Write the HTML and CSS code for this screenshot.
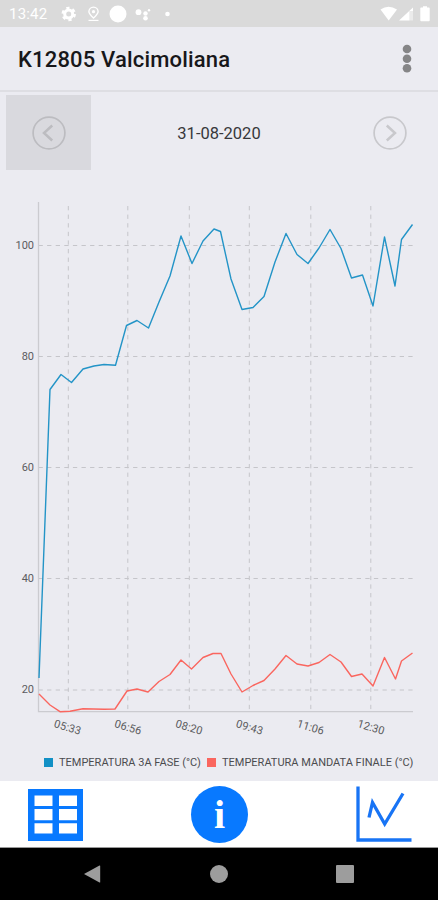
FILE: index.html
```
<!DOCTYPE html>
<html lang="it">
<head>
<meta charset="utf-8">
<title>K12805 Valcimoliana</title>
<link rel="stylesheet" href="styles.css">
</head>
<body>
<div class="screen">
  <div class="status">
    <span class="clock">13:42</span>
    <svg class="status-left" width="120" height="27" viewBox="0 0 120 27" fill="#fff">
      <circle cx="13.700" cy="14" r="4" fill="none" stroke="#fff" stroke-width="3"/>
      <circle cx="13.700" cy="14" r="6" fill="none" stroke="#fff" stroke-width="2.400" stroke-dasharray="3.200 3.083"/>
      <path d="M38.500 18C35.500 15.200 33.900 13.500 33.900 11.700a4.600 4.600 0 0 1 9.200 0c0 1.800-1.600 3.500-4.600 6.300z" fill="none" stroke="#fff" stroke-width="1.400"/>
      <circle cx="38.500" cy="11.700" r="1.600"/>
      <path d="M33.500 19.800h10V21h-10z"/>
      <circle cx="63" cy="14" r="8.500"/>
      <circle cx="83.500" cy="12.200" r="2.900"/><circle cx="90.500" cy="13.500" r="2.200"/><circle cx="90.500" cy="18.200" r="2.300"/><circle cx="94" cy="10.300" r="1.200"/>
      <circle cx="112.500" cy="14" r="2.300"/>
    </svg>
    <svg class="status-right" width="54" height="27" viewBox="0 0 54 27" fill="#fff">
      <path d="M3.500 9.500Q11.500 4 20 9.500L11.700 20.500z"/>
      <path d="M22 20.500L36 7.500V11h-3.500v9.500z"/><path d="M32.500 11H36v9.500h-3.500z" opacity=".45"/>
      <path d="M44 7.600h2V6.300h4v1.300h2q.7 0 .7.700v12q0 .9-.9.900h-7.600q-.9 0-.9-.9v-12q0-.7.700-.7z"/>
    </svg>
  </div>
  <header class="header">
    <h1 class="title">K12805 Valcimoliana</h1>
    <svg class="more" width="10" height="30" viewBox="0 0 10 30" fill="#858587"><circle cx="5" cy="5" r="4.300"/><circle cx="5" cy="14.700" r="4.300"/><circle cx="5" cy="24.300" r="4.300"/></svg>
  </header>
  <div class="days">
    <div class="day-button pressed"><svg width="36" height="36" viewBox="0 0 36 36" fill="none" stroke="#bcbcc0"><circle cx="18" cy="18" r="15.900" stroke-width="1.700"/><path d="M21.200 10.500L13 18l8.200 7.500" stroke-width="2.500"/></svg></div>
    <div class="date">31-08-2020</div>
    <div class="day-button"><svg width="36" height="36" viewBox="0 0 36 36" fill="none" stroke="#c8c8cc"><circle cx="18" cy="18" r="15.900" stroke-width="1.700"/><path d="M14.800 10.500L23 18l-8.200 7.500" stroke-width="2.500"/></svg></div>
  </div>
  <svg class="chart" width="438" height="580" viewBox="0 170 438 580">
    <g class="grid">
      <path d="M38.500 245.500H413M38.500 356.500H413M38.500 467.500H413M38.500 578.500H413M38.500 690H413"/>
      <path d="M68.300 206V711.500M127.800 206V711.500M189.300 206V711.500M249.300 206V711.500M310.800 206V711.500M370.800 206V711.500"/>
    </g>
    <path class="axis" d="M38.500 202V711.700H413"/>
    <g class="y-labels"><text x="34" y="248.500">100</text><text x="34" y="359.700">80</text><text x="34" y="470.700">60</text><text x="34" y="582">40</text><text x="34" y="693">20</text></g>
    <g class="x-labels">
      <text transform="translate(67.500 727.500) rotate(17)" y="3.500">05:33</text>
      <text transform="translate(128 727.500) rotate(17)" y="3.500">06:56</text>
      <text transform="translate(189 727.500) rotate(17)" y="3.500">08:20</text>
      <text transform="translate(249.500 727.500) rotate(17)" y="3.500">09:43</text>
      <text transform="translate(310.500 727.500) rotate(17)" y="3.500">11:06</text>
      <text transform="translate(371 727.500) rotate(17)" y="3.500">12:30</text>
    </g>
    <polyline class="line supply" points="39,694 50,705 60,711.700 70,711.200 83,708.700 104,709.200 115,709 127,691 137,689 148,692 159,681.500 170,674.500 181,660 191.500,669 203,657.500 213,653.500 221,653.500 231,674 242,692 253,685.500 264,680.500 275,669 286,655.500 297,664 308,666 319,662.500 330,654.500 341,662 351.500,676.500 362,674 373,686 384.500,657.500 395.500,679 401.500,661 412.500,653"/>
    <polyline class="line phase" points="39,678 50,389.500 61,374.500 71.500,382.500 83,369 94,366 104,364.500 115.500,365.300 126.500,325.500 137,320.500 148.500,328 159,302 170,276 181,236 192,263.500 203,241 214,229 220.500,231.500 231,279 242,309.500 253,307.500 264,296.500 275,262 286,233.500 297,254.500 308,263.500 319,248 330,229.500 341,248.500 351.500,278 362.500,275 373,306 384.500,237 395,286 401.500,239.500 412.500,224.500"/>
  </svg>
  <div class="legend">
    <span class="swatch blue"></span><span class="name first">TEMPERATURA 3A FASE (°C)</span>
    <span class="swatch red"></span><span class="name second">TEMPERATURA MANDATA FINALE (°C)</span>
  </div>
  <nav class="tabs">
    <svg class="table-icon" width="55" height="52" viewBox="0 0 55 52"><path fill="#0879ff" fill-rule="evenodd" d="M0 0h55v52H0zM6.500 6.500v10.500h18V6.500zM31 6.500v10.500h18V6.500zM6.500 20v11.200h18V20zM31 20v11.200h18V20zM6.500 34.200v10.300h18V34.200zM31 34.200v10.300h18V34.200z"/></svg>
    <div class="info">i</div>
    <svg width="56" height="56" viewBox="0 0 56 56" fill="none" stroke="#1874f5"><path d="M2 .5V54h53.500" stroke-width="3.300"/><path d="M13 31.500L16.500 16.500 28.700 38 47 7.500" stroke-width="3.300"/></svg>
  </nav>
  <div class="system">
    <svg width="18" height="20" viewBox="0 0 18 20" fill="#9d9d9d"><path d="M1 10L16.500 1.500Q17.200 1.200 17.200 2v16q0 .8-.7.500z"/></svg>
    <span class="home"></span>
    <span class="recent"></span>
  </div>
</div>
</body>
</html>
```
FILE: styles.css
```
* { box-sizing: border-box; }
body { margin: 0; font-family: Roboto, sans-serif; background: #ebebf1; }
.screen { width: 438px; height: 900px; display: flex; flex-direction: column; overflow: hidden; }
svg { display: block; flex: none; }
.status { height: 27px; flex: none; background: #dadada; display: flex; align-items: center; padding: 0 7px 0 9px; color: #fff; }
.clock { width: 46px; font-size: 15px; line-height: 27px; padding-top: 2px; letter-spacing: .2px; white-space: nowrap; }
.status-right { margin-left: auto; }
.header { height: 65px; flex: none; display: flex; align-items: center; justify-content: space-between; padding: 0 26px 0 18px; border-bottom: 2px solid #dedee3; }
.title { margin: 3px 0 0; font-size: 22px; line-height: 28px; font-weight: 500; letter-spacing: .17px; color: #17171a; white-space: nowrap; }
.days { height: 78px; flex: none; display: flex; align-items: center; justify-content: space-between; padding: 3px 6px 0; }
.day-button { width: 85px; height: 75px; display: flex; align-items: center; justify-content: center; }
.pressed { background: #d9d9de; }
.date { padding-top: 2px; font-size: 16.500px; color: #38383b; }
.grid path { fill: none; stroke: #c5c5ca; stroke-width: 1; stroke-dasharray: 4.300 4.300; }
.axis { fill: none; stroke: #cbcbd0; stroke-width: 1.300; }
.y-labels, .x-labels { font-size: 11px; fill: #5c5c60; }
.y-labels { text-anchor: end; }
.x-labels { text-anchor: middle; }
.line { fill: none; stroke-width: 1.400; stroke-linejoin: round; }
.supply { stroke: #fa665f; }
.phase { stroke: #2394c7; }
.legend { height: 31px; flex: none; display: flex; align-items: center; padding: 0 0 7px 44px; color: #4b4b4f; font-size: 11px; white-space: nowrap; }
.swatch { width: 9px; height: 9px; flex: none; }
.blue { background: #1290c5; }
.red { background: #fa665f; }
.name { margin-left: 6px; }
.first { width: 148px; }
.tabs { height: 67px; flex: none; background: #fff; display: flex; align-items: center; justify-content: space-between; padding: 0 26px 0 28px; border-bottom: 1px solid #999; }
.table-icon { margin-top: 2px; }
.info { width: 57px; height: 57px; border-radius: 50%; background: #0879ff; color: #fff; font: bold 40px/57px "Liberation Serif", serif; text-align: center; }
.system { flex: 1; background: #000; display: flex; align-items: center; justify-content: space-between; padding: 0 84px 0 83px; }
.home { width: 18px; height: 18px; border-radius: 50%; background: #9d9d9d; }
.recent { width: 18px; height: 18px; border-radius: 1px; background: #9d9d9d; }
```
